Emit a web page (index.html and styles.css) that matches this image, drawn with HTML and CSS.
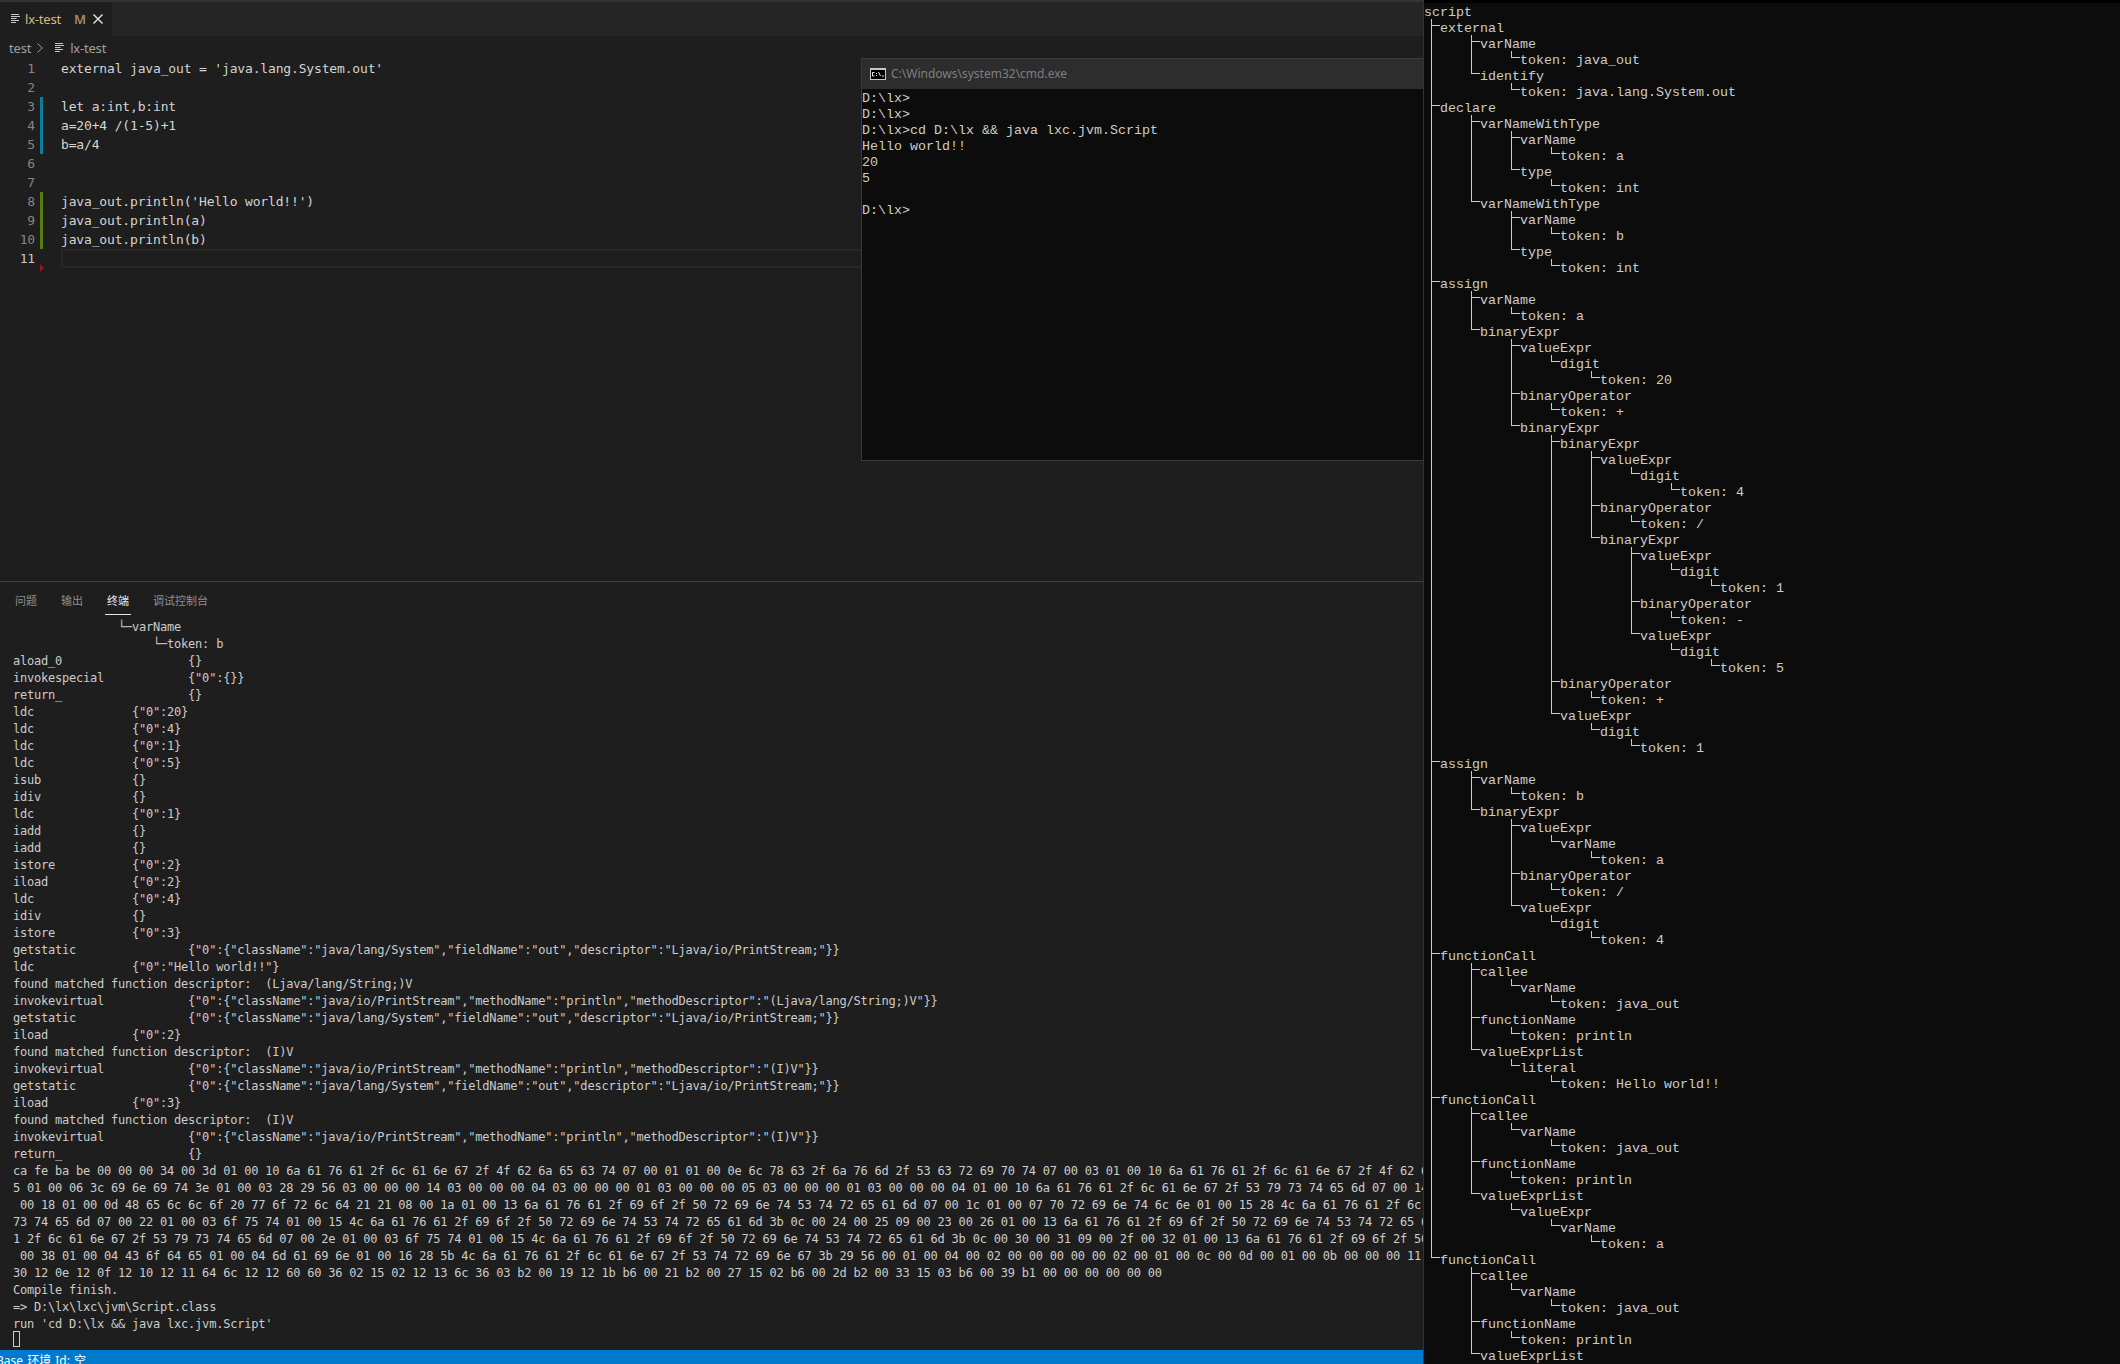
FILE: index.html
```html
<!DOCTYPE html>
<html lang="zh">
<head>
<meta charset="utf-8">
<title>lx-test</title>
<link rel="stylesheet" href="styles.css">
</head>
<body>
<div class="desktop">
  <main class="vscode">
    <div class="tabbar">
      <div class="tab">
        <svg class="file-icon" viewBox="0 0 9 10" aria-hidden="true"><path d="M0 0.5h8M0 2.5h9M0 4.500h5.500M0 6.500h8M0 8.500h5"/></svg>
        <span class="tab-name">lx-test</span>
        <span class="tab-mark">M</span>
        <svg class="tab-close" viewBox="0 0 10 10" aria-hidden="true"><path d="M0.500 0.500L9.500 9.500M9.500 0.500L0.500 9.500"/></svg>
      </div>
    </div>
    <nav class="crumbs">
      <span>test</span>
      <svg class="chevron" viewBox="0 0 6 10" aria-hidden="true"><path d="M0.500 0.500L5.300 5L0.500 9.500"/></svg>
      <svg class="file-icon crumb-icon" viewBox="0 0 9 10" aria-hidden="true"><path d="M0 0.500h8M0 2.500h9M0 4.500h5.500M0 6.500h8M0 8.500h5"/></svg>
      <span>lx-test</span>
    </nav>
    <section class="editor">
      <div class="line"><span class="num">1</span><span class="git"></span><span class="code">external java_out = 'java.lang.System.out'</span></div>
      <div class="line"><span class="num">2</span><span class="git"></span><span class="code"></span></div>
      <div class="line"><span class="num">3</span><span class="git mod"></span><span class="code">let a:int,b:int</span></div>
      <div class="line"><span class="num">4</span><span class="git mod"></span><span class="code">a=20+4 /(1-5)+1</span></div>
      <div class="line"><span class="num">5</span><span class="git mod"></span><span class="code">b=a/4</span></div>
      <div class="line"><span class="num">6</span><span class="git"></span><span class="code"></span></div>
      <div class="line"><span class="num">7</span><span class="git"></span><span class="code"></span></div>
      <div class="line"><span class="num">8</span><span class="git add"></span><span class="code">java_out.println('Hello world!!')</span></div>
      <div class="line"><span class="num">9</span><span class="git add"></span><span class="code">java_out.println(a)</span></div>
      <div class="line"><span class="num">10</span><span class="git add"></span><span class="code">java_out.println(b)</span></div>
      <div class="line active"><span class="num">11</span><span class="git del"></span><span class="code"></span></div>
      <div class="cmd">
        <div class="cmd-title">
          <svg class="cmd-icon" viewBox="0 0 16 12" aria-hidden="true"><rect width="16" height="12" fill="#c8c8c8"/><rect x="1" y="2" width="14" height="9" fill="#000"/><path d="M2.500 4.500h2M2.500 4.500v3.500h2M6.500 5v0.900M6.500 7v0.900M8.500 4l2 4M12 8h2" stroke="#e8e8e8" fill="none"/></svg>
          <span>C:\Windows\system32\cmd.exe</span>
        </div>
<pre class="cmd-body">D:\lx&gt;
D:\lx&gt;
D:\lx&gt;cd D:\lx &amp;&amp; java lxc.jvm.Script
Hello world!!
20
5

D:\lx&gt;</pre>
      </div>
    </section>
    <section class="panel">
      <div class="panel-tabs">
        <span class="panel-tab">问题</span>
        <span class="panel-tab">输出</span>
        <span class="panel-tab current">终端</span>
        <span class="panel-tab">调试控制台</span>
      </div>
<pre class="term">               └─varName
                    └─token: b
aload_0                  {}
invokespecial            {"0":{}}
return_                  {}
ldc              {"0":20}
ldc              {"0":4}
ldc              {"0":1}
ldc              {"0":5}
isub             {}
idiv             {}
ldc              {"0":1}
iadd             {}
iadd             {}
istore           {"0":2}
iload            {"0":2}
ldc              {"0":4}
idiv             {}
istore           {"0":3}
getstatic                {"0":{"className":"java/lang/System","fieldName":"out","descriptor":"Ljava/io/PrintStream;"}}
ldc              {"0":"Hello world!!"}
found matched function descriptor:  (Ljava/lang/String;)V
invokevirtual            {"0":{"className":"java/io/PrintStream","methodName":"println","methodDescriptor":"(Ljava/lang/String;)V"}}
getstatic                {"0":{"className":"java/lang/System","fieldName":"out","descriptor":"Ljava/io/PrintStream;"}}
iload            {"0":2}
found matched function descriptor:  (I)V
invokevirtual            {"0":{"className":"java/io/PrintStream","methodName":"println","methodDescriptor":"(I)V"}}
getstatic                {"0":{"className":"java/lang/System","fieldName":"out","descriptor":"Ljava/io/PrintStream;"}}
iload            {"0":3}
found matched function descriptor:  (I)V
invokevirtual            {"0":{"className":"java/io/PrintStream","methodName":"println","methodDescriptor":"(I)V"}}
return_                  {}
ca fe ba be 00 00 00 34 00 3d 01 00 10 6a 61 76 61 2f 6c 61 6e 67 2f 4f 62 6a 65 63 74 07 00 01 01 00 0e 6c 78 63 2f 6a 76 6d 2f 53 63 72 69 70 74 07 00 03 01 00 10 6a 61 76 61 2f 6c 61 6e 67 2f 4f 62 6a 65 63
5 01 00 06 3c 69 6e 69 74 3e 01 00 03 28 29 56 03 00 00 00 14 03 00 00 00 04 03 00 00 00 01 03 00 00 00 05 03 00 00 00 01 03 00 00 00 04 01 00 10 6a 61 76 61 2f 6c 61 6e 67 2f 53 79 73 74 65 6d 07 00 14
 00 18 01 00 0d 48 65 6c 6c 6f 20 77 6f 72 6c 64 21 21 08 00 1a 01 00 13 6a 61 76 61 2f 69 6f 2f 50 72 69 6e 74 53 74 72 65 61 6d 07 00 1c 01 00 07 70 72 69 6e 74 6c 6e 01 00 15 28 4c 6a 61 76 61 2f 6c 61
73 74 65 6d 07 00 22 01 00 03 6f 75 74 01 00 15 4c 6a 61 76 61 2f 69 6f 2f 50 72 69 6e 74 53 74 72 65 61 6d 3b 0c 00 24 00 25 09 00 23 00 26 01 00 13 6a 61 76 61 2f 69 6f 2f 50 72 69 6e 74 53 74 72 65 61
1 2f 6c 61 6e 67 2f 53 79 73 74 65 6d 07 00 2e 01 00 03 6f 75 74 01 00 15 4c 6a 61 76 61 2f 69 6f 2f 50 72 69 6e 74 53 74 72 65 61 6d 3b 0c 00 30 00 31 09 00 2f 00 32 01 00 13 6a 61 76 61 2f 69 6f 2f 50 72
 00 38 01 00 04 43 6f 64 65 01 00 04 6d 61 69 6e 01 00 16 28 5b 4c 6a 61 76 61 2f 6c 61 6e 67 2f 53 74 72 69 6e 67 3b 29 56 00 01 00 04 00 02 00 00 00 00 00 02 00 01 00 0c 00 0d 00 01 00 0b 00 00 00 11 00
30 12 0e 12 0f 12 10 12 11 64 6c 12 12 60 60 36 02 15 02 12 13 6c 36 03 b2 00 19 12 1b b6 00 21 b2 00 27 15 02 b6 00 2d b2 00 33 15 03 b6 00 39 b1 00 00 00 00 00 00
Compile finish.
=&gt; D:\lx\lxc\jvm\Script.class
run 'cd D:\lx &amp;&amp; java lxc.jvm.Script'
<span class="cursor"></span></pre>
    </section>
    <footer class="status"><span class="status-text">Base 环境 Id: 空</span></footer>
  </main>
  <aside class="ast">
    <div class="ast-root">script</div>
    <ul class="tree">
      <li><span>external</span>
        <ul>
          <li><span>varName</span><ul><li><span>token: java_out</span></li></ul></li>
          <li><span>identify</span><ul><li><span>token: java.lang.System.out</span></li></ul></li>
        </ul>
      </li>
      <li><span>declare</span>
        <ul>
          <li><span>varNameWithType</span>
            <ul>
              <li><span>varName</span><ul><li><span>token: a</span></li></ul></li>
              <li><span>type</span><ul><li><span>token: int</span></li></ul></li>
            </ul>
          </li>
          <li><span>varNameWithType</span>
            <ul>
              <li><span>varName</span><ul><li><span>token: b</span></li></ul></li>
              <li><span>type</span><ul><li><span>token: int</span></li></ul></li>
            </ul>
          </li>
        </ul>
      </li>
      <li><span>assign</span>
        <ul>
          <li><span>varName</span><ul><li><span>token: a</span></li></ul></li>
          <li><span>binaryExpr</span>
            <ul>
              <li><span>valueExpr</span><ul><li><span>digit</span><ul><li><span>token: 20</span></li></ul></li></ul></li>
              <li><span>binaryOperator</span><ul><li><span>token: +</span></li></ul></li>
              <li><span>binaryExpr</span>
                <ul>
                  <li><span>binaryExpr</span>
                    <ul>
                      <li><span>valueExpr</span><ul><li><span>digit</span><ul><li><span>token: 4</span></li></ul></li></ul></li>
                      <li><span>binaryOperator</span><ul><li><span>token: /</span></li></ul></li>
                      <li><span>binaryExpr</span>
                        <ul>
                          <li><span>valueExpr</span><ul><li><span>digit</span><ul><li><span>token: 1</span></li></ul></li></ul></li>
                          <li><span>binaryOperator</span><ul><li><span>token: -</span></li></ul></li>
                          <li><span>valueExpr</span><ul><li><span>digit</span><ul><li><span>token: 5</span></li></ul></li></ul></li>
                        </ul>
                      </li>
                    </ul>
                  </li>
                  <li><span>binaryOperator</span><ul><li><span>token: +</span></li></ul></li>
                  <li><span>valueExpr</span><ul><li><span>digit</span><ul><li><span>token: 1</span></li></ul></li></ul></li>
                </ul>
              </li>
            </ul>
          </li>
        </ul>
      </li>
      <li><span>assign</span>
        <ul>
          <li><span>varName</span><ul><li><span>token: b</span></li></ul></li>
          <li><span>binaryExpr</span>
            <ul>
              <li><span>valueExpr</span><ul><li><span>varName</span><ul><li><span>token: a</span></li></ul></li></ul></li>
              <li><span>binaryOperator</span><ul><li><span>token: /</span></li></ul></li>
              <li><span>valueExpr</span><ul><li><span>digit</span><ul><li><span>token: 4</span></li></ul></li></ul></li>
            </ul>
          </li>
        </ul>
      </li>
      <li><span>functionCall</span>
        <ul>
          <li><span>callee</span><ul><li><span>varName</span><ul><li><span>token: java_out</span></li></ul></li></ul></li>
          <li><span>functionName</span><ul><li><span>token: println</span></li></ul></li>
          <li><span>valueExprList</span><ul><li><span>literal</span><ul><li><span>token: Hello world!!</span></li></ul></li></ul></li>
        </ul>
      </li>
      <li><span>functionCall</span>
        <ul>
          <li><span>callee</span><ul><li><span>varName</span><ul><li><span>token: java_out</span></li></ul></li></ul></li>
          <li><span>functionName</span><ul><li><span>token: println</span></li></ul></li>
          <li><span>valueExprList</span><ul><li><span>valueExpr</span><ul><li><span>varName</span><ul><li><span>token: a</span></li></ul></li></ul></li></ul></li>
        </ul>
      </li>
      <li><span>functionCall</span>
        <ul>
          <li><span>callee</span><ul><li><span>varName</span><ul><li><span>token: java_out</span></li></ul></li></ul></li>
          <li><span>functionName</span><ul><li><span>token: println</span></li></ul></li>
          <li><span>valueExprList</span></li>
        </ul>
      </li>
    </ul>
  </aside>
</div>
</body>
</html>
```
FILE: styles.css
```css
* { box-sizing: border-box; }
html, body { margin: 0; height: 100%; overflow: hidden; background: #0c0c0c; }

.desktop {
  display: grid;
  grid-template-columns: 1424px 696px;
  height: 1364px;
  overflow: hidden;
}

/* ---------- VS Code ---------- */
.vscode {
  display: flex;
  flex-direction: column;
  height: 1364px;
  background: #1e1e1e;
  border-right: 1px solid #333;
  overflow: hidden;
}
.tabbar {
  flex: none;
  display: flex;
  height: 36px;
  border-top: 2px solid #333;
  background: #252526;
}
.tab {
  display: flex;
  align-items: center;
  width: 112px;
  padding-left: 11px;
  background: #1e1e1e;
  font: 13px/18px "Noto Sans", "Open Sans", sans-serif;
}
.file-icon { width: 9px; height: 10px; flex: none; stroke: #c5c5c5; stroke-width: 1; fill: none; }
.tab-name { margin-left: 5px; color: #d7ba7d; width: 49px; letter-spacing: -0.2px; }
.tab-mark { color: #a08c66; font-weight: 600; width: 19px; }
.tab-close { width: 10px; height: 10px; stroke: #e8e8e8; stroke-width: 1.4; fill: none; }

.crumbs {
  flex: none;
  display: flex;
  align-items: center;
  height: 23px;
  padding-left: 9px;
  color: #a0a0a0;
  font: 13px/18px "Noto Sans", "Open Sans", sans-serif;
  letter-spacing: -0.2px;
}
.chevron { width: 6px; height: 10px; margin-left: 6px; stroke: #a0a0a0; stroke-width: 1; fill: none; }
.crumb-icon { margin: 0 6px 0 12px; }

.editor {
  flex: 1;
  position: relative;
  font: 13px/19px "DejaVu Sans Mono", monospace;
  letter-spacing: -0.16px;
  color: #d4d4d4;
}
.line { display: flex; height: 19px; white-space: pre; }
.num { width: 35px; text-align: right; color: #858585; flex: none; }
.git { width: 3px; margin: 0 18px 0 5px; flex: none; position: relative; }
.git.mod { background: #0c7d9d; }
.git.add { background: #587c0c; }
.git.del::after {
  content: "";
  position: absolute;
  left: 0;
  top: 15px;
  border-left: 4px solid #94151b;
  border-top: 4px solid transparent;
  border-bottom: 4px solid transparent;
}
.code { flex: 1; }
.active .num { color: #c6c6c6; }
.active .code { border: 2px solid #282828; }

/* ---------- Console window ---------- */
.cmd {
  position: absolute;
  left: 861px;
  top: -1px;
  width: 562px;
  height: 403px;
  background: #0c0c0c;
  border: 1px solid #3a3a3a;
  border-right: 0;
  letter-spacing: 0;
}
.cmd-title {
  display: flex;
  align-items: center;
  gap: 5px;
  height: 30px;
  padding-left: 8px;
  background: #2d2d2d;
  color: #7f7f7f;
  font: 12px/16px "Noto Sans", "Open Sans", sans-serif;
}
.cmd-icon { width: 16px; height: 12px; flex: none; }
.cmd-body {
  margin: 0;
  padding-top: 2px;
  color: #cccccc;
  font: 13.333px/16px "Liberation Mono", monospace;
}

/* ---------- Bottom panel ---------- */
.panel {
  flex: none;
  height: 769px;
  border-top: 1px solid #414141;
  overflow: hidden;
}
.panel-tabs {
  display: flex;
  gap: 20px;
  height: 35px;
  padding-left: 13px;
  font: 11px/16px "Noto Sans CJK SC", sans-serif;
  color: #8f8f8f;
}
.panel-tab { height: 33px; padding: 10px 2px 0; }
.panel-tab.current { color: #e7e7e7; border-bottom: 1px solid #e7e7e7; }
.term {
  margin: 0;
  padding: 2px 0 0 13px;
  color: #cccccc;
  font: 12px/17px "DejaVu Sans Mono", monospace;
  letter-spacing: -0.22px;
  white-space: pre;
  overflow: hidden;
}
.cursor {
  display: inline-block;
  width: 7px;
  height: 16px;
  margin-top: -2px;
  border: 1px solid #cccccc;
  vertical-align: top;
}

.status {
  flex: none;
  height: 14px;
  padding-top: 2px;
  background: #007acc;
  color: #ffffff;
  font: 12px/18px "Noto Sans", "Noto Sans CJK SC", sans-serif;
  word-spacing: 1px;
  white-space: pre;
  overflow: hidden;
}
.status-text { display: block; margin-left: -4px; }

/* ---------- AST tree ---------- */
.ast {
  height: 1364px;
  padding-top: 1px;
  border-top: 3px solid #000;
  background: #0c0c0c;
  color: #cccccc;
  font: 13.333px/16px "Liberation Mono", monospace;
  overflow: hidden;
}
.ast-root { height: 16px; padding-top: 1px; }
.ast ul { list-style: none; margin: 0; padding: 0 0 0 40px; }
.ast .tree { padding-left: 16px; }
.ast li { position: relative; }
.ast li::before {
  content: "";
  position: absolute;
  left: -9px;
  top: -1px;
  bottom: 0;
  border-left: 1px solid #cccccc;
}
.ast li:last-child::before { bottom: auto; height: 7px; }
.ast li > span { position: relative; display: block; height: 16px; padding-top: 1px; white-space: pre; }
.ast li > span::before {
  content: "";
  position: absolute;
  left: -9px;
  top: 5px;
  width: 9px;
  border-top: 1px solid #cccccc;
}
```
